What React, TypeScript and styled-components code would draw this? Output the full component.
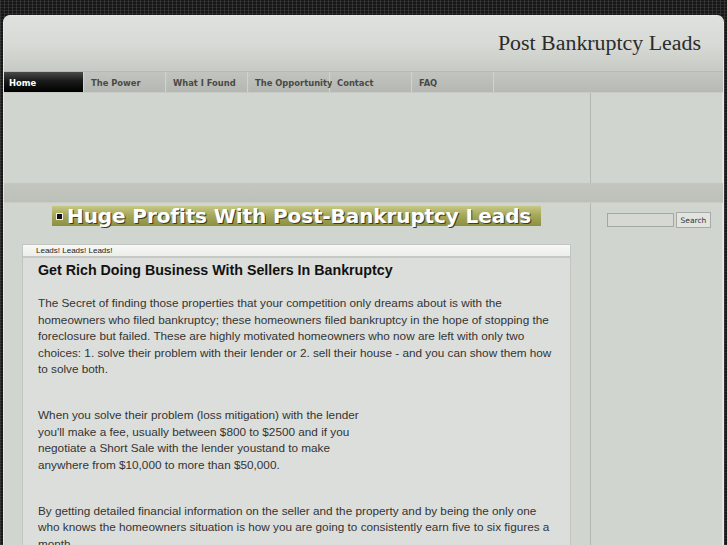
import React from "react";
import styled, { createGlobalStyle } from "styled-components";

const GlobalStyle = createGlobalStyle`
    html, body {
        margin: 0;
        padding: 0;
        height: 100%;
        overflow: hidden;
    }
    body {
        background-color: #161616;
        background-image:
            repeating-linear-gradient(90deg, rgba(70, 70, 70, 0.55) 0 1px, transparent 1px 4px),
            repeating-linear-gradient(0deg, rgba(60, 60, 60, 0.5) 0 1px, transparent 1px 3px);
        font-family: "Liberation Sans", Arial, sans-serif;
    }
`;

const Page = styled.div`
    padding: 15px 3px 0 3px;
`;

const Wrapper = styled.div`
    background: #d1d5cf;
    border: 1px solid #e6e8e4;
    border-bottom: none;
    border-radius: 7px 7px 0 0;
    height: 540px;
    overflow: hidden;
`;

const Header = styled.div`
    height: 55px;
    display: flex;
    align-items: flex-start;
    justify-content: flex-end;
    padding-right: 22px;
    background: linear-gradient(to bottom, #dfe1de 0%, #d8dad6 50%, #c8cac6 100%);
    border-radius: 6px 6px 0 0;
    border-bottom: 1px solid #b8bab6;
`;

const SiteTitle = styled.h1`
    margin: 14px 0 0 0;
    font-family: "Liberation Serif", "Times New Roman", serif;
    font-weight: normal;
    font-size: 21.9px;
    color: #2b2b2b;
`;

const Nav = styled.ul`
    list-style: none;
    margin: 0;
    padding: 0;
    height: 20px;
    display: flex;
    background: linear-gradient(to bottom, #c4c6c2 0%, #b7b9b5 100%);
    border-bottom: 1px solid #c9ccc6;
`;

const NavItem = styled.li<{ $active?: boolean }>`
    width: 80px;
    height: 20px;
    display: flex;
    align-items: center;
    padding-left: 5px;
    box-sizing: border-box;
    margin-right: 2px;
    border-right: 1px solid #d0d2ce;
    font-family: "DejaVu Sans Condensed", "DejaVu Sans", sans-serif;
    font-weight: bold;
    font-size: 9.3px;
    white-space: nowrap;
    color: ${(p) => (p.$active ? "#ffffff" : "#4a4a44")};
    background: ${(p) =>
        p.$active
            ? "linear-gradient(to bottom, #4a4a4a 0%, #1a1a1a 45%, #000000 100%)"
            : "linear-gradient(to bottom, #c2c4c0 0%, #b5b7b3 100%)"};
`;

const Row = styled.div<{ $height?: number }>`
    display: flex;
    height: ${(p) => (p.$height ? `${p.$height}px` : "auto")};
`;

const MainCol = styled.div`
    flex: 1;
    min-width: 0;
`;

const SideCol = styled.div`
    width: 133px;
    border-left: 1px solid #b4b8b1;
    border-right: 1px solid #e2e4e0;
    display: flex;
    align-items: flex-start;
    gap: 2px;
    padding: 9px 0 0 16px;
    box-sizing: border-box;
`;

const Band = styled.div`
    height: 19px;
    background: linear-gradient(to bottom, #c3c7c0 0%, #bcc0b9 100%);
    border-bottom: 1px solid #c9cdc6;
`;

const Banner = styled.h2`
    margin: 2px 0 0 48px;
    width: 489px;
    height: 21px;
    box-sizing: border-box;
    display: flex;
    align-items: center;
    gap: 4px;
    padding-left: 4px;
    background: linear-gradient(to bottom, #c7c985 0%, #a6a85a 45%, #8c8e40 100%);
    border-top: 1px solid #d6d8a4;
    font-family: "DejaVu Sans", Verdana, sans-serif;
    font-weight: bold;
    font-size: 20px;
    line-height: 20px;
    color: #ffffff;
    text-shadow: 1px 1px 0 #3a3a2a;
    white-space: nowrap;
    letter-spacing: -0.1px;
`;

const Bullet = styled.span`
    width: 5px;
    height: 5px;
    background: #111;
    border: 1px solid #eee;
    flex: none;
`;

const ContentBox = styled.div`
    margin: 18px 19px 0 18px;
    border: 1px solid #c2c4c0;
    background: #dcdedb;
`;

const BoxHeader = styled.div`
    height: 11px;
    padding-left: 13px;
    font-size: 8px;
    line-height: 11px;
    color: #222;
    background: linear-gradient(to bottom, #f8f8f6 0%, #eceeea 100%);
    border-bottom: 2px solid #c6c8c4;
`;

const BoxBody = styled.div`
    padding: 2px 15px 0 15px;
`;

const Heading = styled.h3`
    margin: 0 0 15px 0;
    font-size: 14.25px;
    line-height: 20px;
    color: #111;
    font-weight: bold;
`;

const Para = styled.p<{ $narrow?: boolean }>`
    margin: 0 0 29.5px 0;
    font-size: 11.75px;
    line-height: 16.5px;
    color: #333;
    max-width: ${(p) => (p.$narrow ? "332px" : "none")};
`;

const SearchInput = styled.input`
    width: 67px;
    height: 14px;
    box-sizing: border-box;
    margin-top: 1px;
    border: 1px solid #a4a8a2;
    background: #d6d9d3;
    padding: 0;
`;

const SearchButton = styled.button`
    width: 35px;
    height: 16px;
    padding: 0;
    font-family: "DejaVu Sans", sans-serif;
    font-size: 7.5px;
    color: #333;
    background: #e2e4e0;
    border: 1px solid #a8aaa6;
`;

const navLinks = ["Home", "The Power", "What I Found", "The Opportunity", "Contact", "FAQ"];

const App: React.FC = () => {
    return (
        <Page>
            <GlobalStyle />
            <Wrapper>
                <Header>
                    <SiteTitle>Post Bankruptcy Leads</SiteTitle>
                </Header>
                <Nav>
                    {navLinks.map((link, i) => (
                        <NavItem key={link} $active={i === 0}>
                            {link}
                        </NavItem>
                    ))}
                </Nav>
                <Row $height={90}>
                    <MainCol />
                    <SideCol />
                </Row>
                <Band />
                <Row>
                    <MainCol>
                        <Banner>
                            <Bullet />
                            Huge Profits With Post-Bankruptcy Leads
                        </Banner>
                        <ContentBox>
                            <BoxHeader>Leads! Leads! Leads!</BoxHeader>
                            <BoxBody>
                                <Heading>Get Rich Doing Business With Sellers In Bankruptcy</Heading>
                                <Para>
                                    The Secret of finding those properties that your competition only dreams
                                    about is with the homeowners who filed bankruptcy; these homeowners filed
                                    bankruptcy in the hope of stopping the foreclosure but failed. These are
                                    highly motivated homeowners who now are left with only two choices: 1. solve
                                    their problem with their lender or 2. sell their house - and you can show
                                    them how to solve both.
                                </Para>
                                <Para $narrow>
                                    When you solve their problem (loss mitigation) with the lender you'll make a
                                    fee, usually between $800 to $2500 and if you negotiate a Short Sale with the
                                    lender youstand to make anywhere from $10,000 to more than $50,000.
                                </Para>
                                <Para>
                                    By getting detailed financial information on the seller and the property and
                                    by being the only one who knows the homeowners situation is how you are going
                                    to consistently earn five to six figures a month.
                                </Para>
                            </BoxBody>
                        </ContentBox>
                    </MainCol>
                    <SideCol>
                        <SearchInput type="text" />
                        <SearchButton>Search</SearchButton>
                    </SideCol>
                </Row>
            </Wrapper>
        </Page>
    );
};

export default App;
